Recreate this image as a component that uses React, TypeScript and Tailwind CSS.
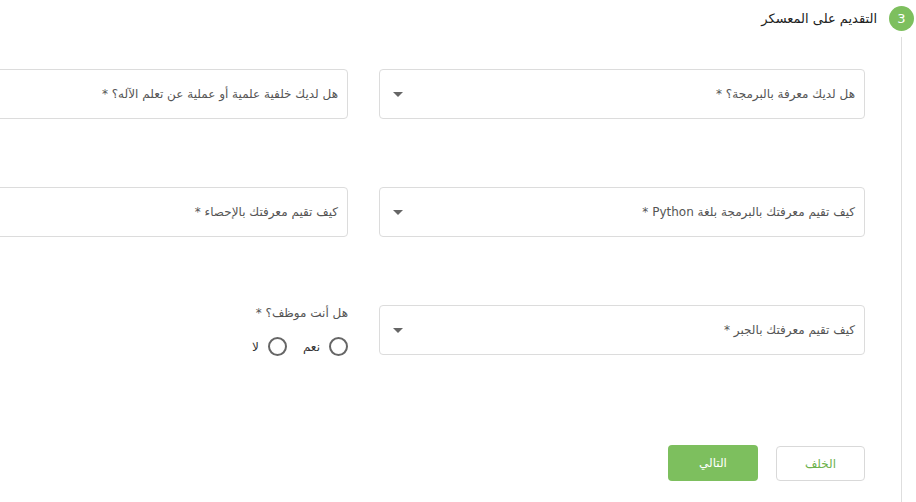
import React from "react";

const font = { fontFamily: '"DejaVu Sans", "Noto Sans", sans-serif' };

function Select({ label }: { label: string }) {
  return (
    <div className="h-[50px] border border-[#dcdcdc] rounded-[4px] bg-white flex items-center justify-between pr-[9px] pl-[13px]">
      <span className="text-[12px] text-[#555]">{label}</span>
      <span className="w-0 h-0 border-l-[5px] border-r-[5px] border-t-[5px] border-l-transparent border-r-transparent border-t-[#666]" />
    </div>
  );
}

function Input({ label }: { label: string }) {
  return (
    <div className="h-[50px] border border-[#dcdcdc] rounded-[4px] bg-white flex items-center pr-[9px]">
      <span className="text-[12px] text-[#555]">{label}</span>
    </div>
  );
}

function Radio({ label }: { label: string }) {
  return (
    <div className="flex items-center gap-[9px]">
      <span className="w-[19px] h-[19px] rounded-full border-2 border-[#666] bg-white" />
      <span className="text-[12px] text-[#333]">{label}</span>
    </div>
  );
}

export default function App() {
  return (
    <div dir="rtl" style={font} className="w-[916px] h-[502px] overflow-hidden bg-white relative">
      <div className="flex items-center pt-[6px] pr-[2px] gap-[12px]">
        <div className="w-[25px] h-[25px] rounded-full bg-[#7dbf5e] text-white text-[13px] flex items-center justify-center">3</div>
        <div className="text-[13px] text-[#222]">التقديم على المعسكر</div>
      </div>
      <div className="flex h-[465px] mt-[6px]">
        <div className="w-[25px] mr-[2px] flex justify-center shrink-0">
          <div className="w-px h-full bg-[#dedede]" />
        </div>
        <div className="mr-[24px] pt-[32px]">
          <div className="grid grid-cols-[486px_486px] gap-x-[31px] gap-y-[68px]">
            <Select label="هل لديك معرفة بالبرمجة؟ *" />
            <Input label="هل لديك خلفية علمية أو عملية عن تعلم الآله؟ *" />
            <Select label="كيف تقيم معرفتك بالبرمجة بلغة Python *" />
            <Input label="كيف تقيم معرفتك بالإحصاء *" />
            <Select label="كيف تقيم معرفتك بالجبر *" />
            <div className="h-[50px] flex flex-col">
              <div className="text-[12px] text-[#555] mt-[-1px]">هل أنت موظف؟ *</div>
              <div className="flex gap-[16px] mt-[15px]">
                <Radio label="نعم" />
                <Radio label="لا" />
              </div>
            </div>
          </div>
          <div className="flex gap-[18px] mt-[91px]">
            <button className="w-[89px] h-[35px] border border-[#d9d9d9] rounded-[4px] bg-white text-[12px] text-[#6cb24c]">الخلف</button>
            <button className="w-[90px] h-[36px] -mt-px rounded-[4px] bg-[#7dbf5e] text-[12px] text-white">التالي</button>
          </div>
        </div>
      </div>
    </div>
  );
}
